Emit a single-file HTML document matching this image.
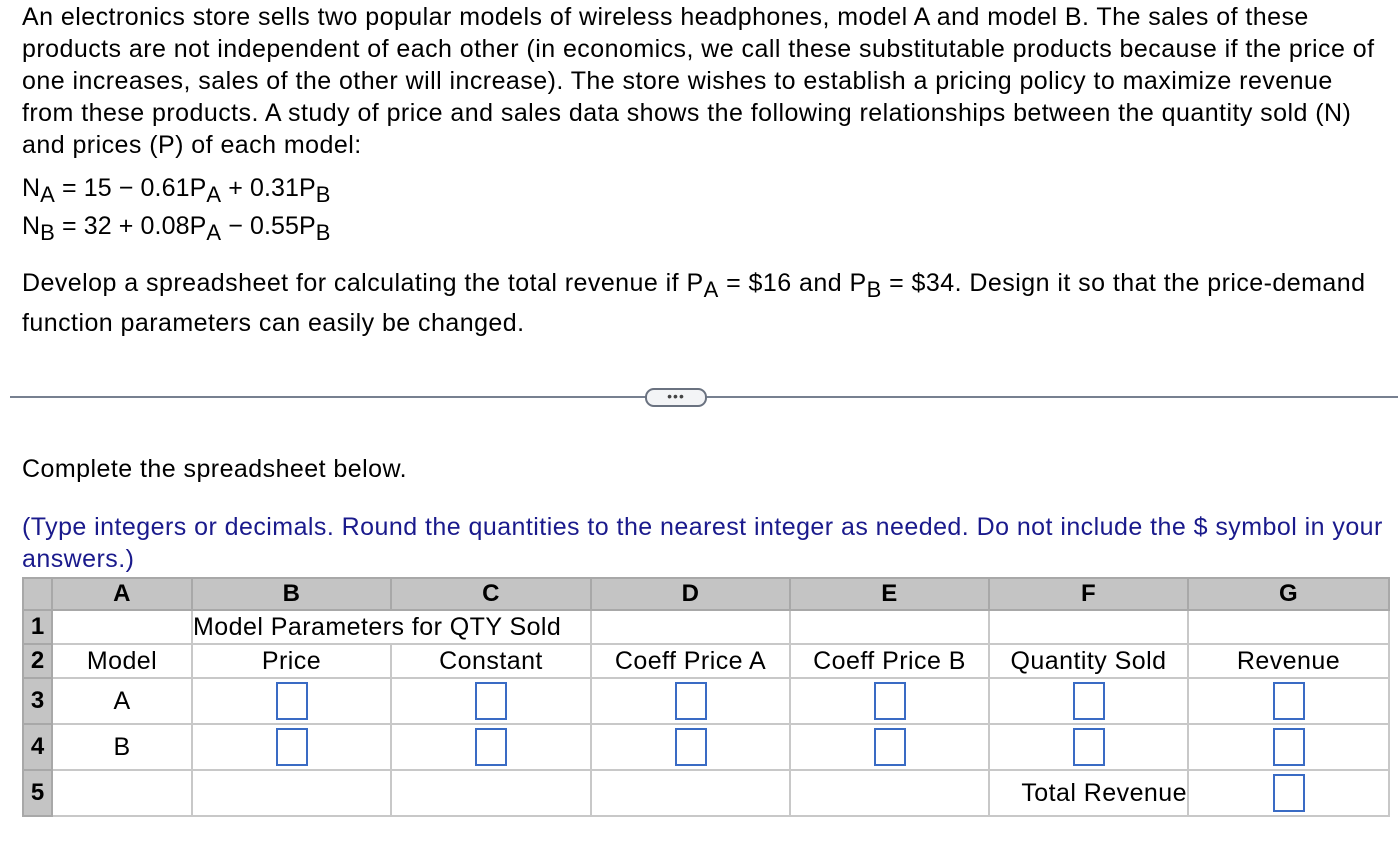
<!DOCTYPE html>
<html><head><style>
body{margin:0;width:1400px;height:842px;background:#fff;font-family:"Liberation Sans",Arial,sans-serif;font-size:25px;letter-spacing:0.45px;color:#000;position:relative;overflow:hidden}
.l{position:absolute;left:22px;white-space:nowrap;line-height:32px}
sub{font-size:22px;vertical-align:-6px;line-height:0}
.blue{color:#1a1a8c}
.eq{letter-spacing:0.1px}
table{position:absolute;left:22px;top:577px;border-collapse:collapse;table-layout:fixed}
td{border:2px solid #c8c8c8;text-align:center;padding:0;font-size:25px;white-space:nowrap;overflow:visible}
tr.h td{background:#c4c4c4;font-weight:bold;border-color:#a8a8a8;height:30px;font-size:24px}
td.r{background:#c4c4c4;font-weight:bold;border-color:#a8a8a8;text-align:center;font-size:24px;letter-spacing:0}
.b{display:inline-block;width:28px;height:34px;border:2px solid #3a6bc4;vertical-align:middle}
</style></head><body>
<div class="l" style="top:1px">An electronics store sells two popular models of wireless headphones, model A and model B. The sales of these</div>
<div class="l" style="top:33px">products are not independent of each other (in economics, we call these substitutable products because if the price of</div>
<div class="l" style="top:65px">one increases, sales of the other will increase). The store wishes to establish a pricing policy to maximize revenue</div>
<div class="l" style="top:97px">from these products. A study of price and sales data shows the following relationships between the quantity sold (N)</div>
<div class="l" style="top:129px">and prices (P) of each model:</div>
<div class="l eq" style="top:172px">N<sub>A</sub> = 15 − 0.61P<sub>A</sub> + 0.31P<sub>B</sub></div>
<div class="l eq" style="top:210px">N<sub>B</sub> = 32 + 0.08P<sub>A</sub> − 0.55P<sub>B</sub></div>
<div class="l" style="top:267px">Develop a spreadsheet for calculating the total revenue if P<sub>A</sub> = $16 and P<sub>B</sub> = $34. Design it so that the price-demand</div>
<div class="l" style="top:307px">function parameters can easily be changed.</div>
<div style="position:absolute;left:10px;top:396px;width:1388px;height:2px;background:#778090"></div>
<div style="position:absolute;left:645px;top:388px;width:58px;height:15px;border:2px solid #6a7280;border-radius:9px;background:#f3f4f6;text-align:center;line-height:12px;font-size:14px;color:#444;letter-spacing:1px">•••</div>
<div class="l" style="top:453px">Complete the spreadsheet below.</div>
<div class="l blue" style="top:511px">(Type integers or decimals. Round the quantities to the nearest integer as needed. Do not include the $ symbol in your</div>
<div class="l blue" style="top:543px">answers.)</div>
<table>
<colgroup><col style="width:29px"><col style="width:140px"><col style="width:199px"><col style="width:200px"><col style="width:199px"><col style="width:199px"><col style="width:199px"><col style="width:201px"></colgroup>
<tr class="h"><td></td><td>A</td><td>B</td><td>C</td><td>D</td><td>E</td><td>F</td><td>G</td></tr>
<tr style="height:34px"><td class="r">1</td><td></td><td colspan="2" style="text-align:left;border-right:none">Model Parameters for QTY Sold</td><td></td><td></td><td></td><td></td></tr>
<tr style="height:34px"><td class="r">2</td><td>Model</td><td>Price</td><td>Constant</td><td>Coeff Price A</td><td>Coeff Price B</td><td>Quantity Sold</td><td>Revenue</td></tr>
<tr style="height:46px"><td class="r">3</td><td>A</td><td><span class="b"></span></td><td><span class="b"></span></td><td><span class="b"></span></td><td><span class="b"></span></td><td><span class="b"></span></td><td><span class="b"></span></td></tr>
<tr style="height:46px"><td class="r">4</td><td>B</td><td><span class="b"></span></td><td><span class="b"></span></td><td><span class="b"></span></td><td><span class="b"></span></td><td><span class="b"></span></td><td><span class="b"></span></td></tr>
<tr style="height:46px"><td class="r">5</td><td></td><td></td><td></td><td></td><td></td><td style="text-align:right">Total Revenue</td><td><span class="b"></span></td></tr>
</table>
</body></html>
